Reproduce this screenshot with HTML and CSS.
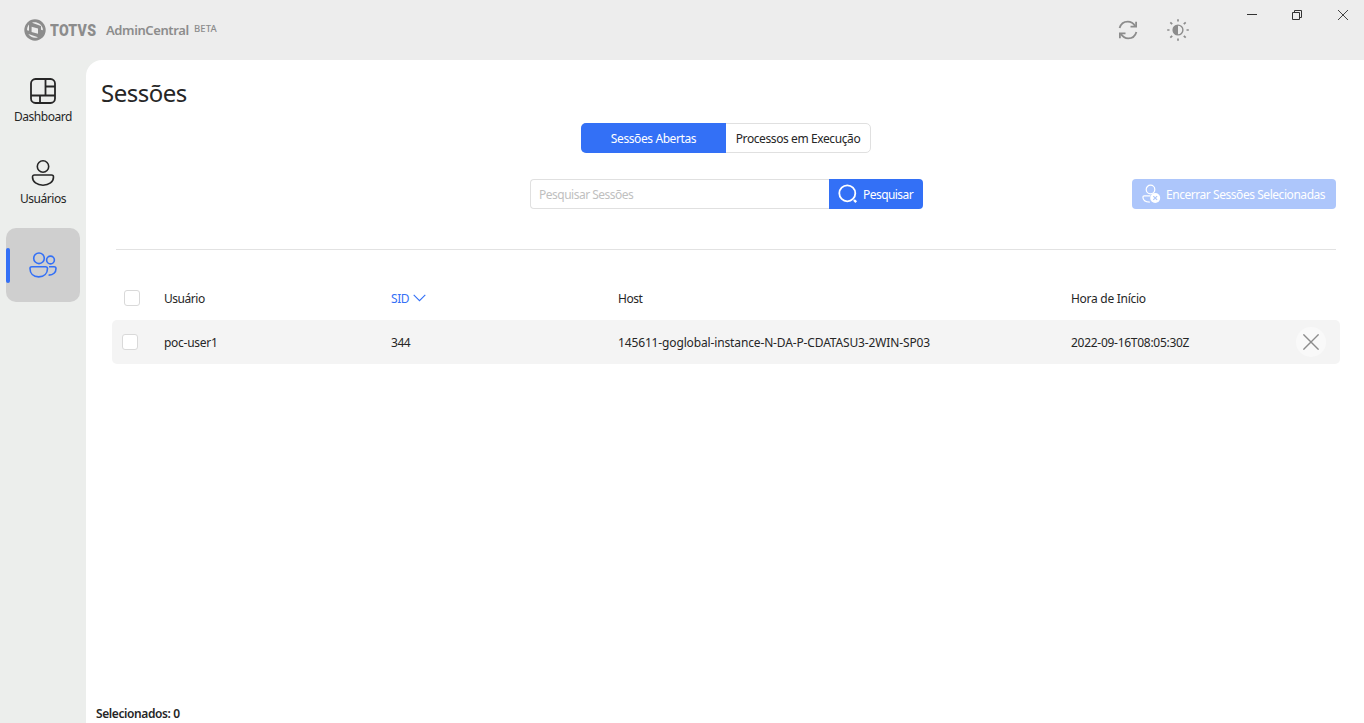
FILE: index.html
```html
<!DOCTYPE html>
<html lang="pt-BR">
  <head>
    <meta charset="UTF-8" />
    <meta name="viewport" content="width=device-width, initial-scale=1.0" />
    <title>TOTVS AdminCentral</title>
    <link rel="stylesheet" href="styles.css" />
  </head>
  <body>
    <header class="topbar">
      <div class="brand">
        <svg class="brand-logo" width="22" height="22" viewBox="0 0 22 22">
          <circle cx="11" cy="11" r="10.7" fill="#8c8c8c" />
          <path d="M7.600 7.800l6.400 1.700v5.200l-6.400-1.700z" fill="#ededed" />
          <path d="M5 5.600v6.200l-1.900-.5C2.900 9.200 3.600 7.200 5 5.600z" fill="#ededed" />
          <path d="M8 3.700c4.300-1.500 9 .8 10.600 5.300.2.700.3 1.500.3 2.300l-1.900-.5V6.900z" fill="#ededed" />
          <path d="M14 18.300c-3.700 1.400-7.600 0-9.700-3.200l2.300.6z" fill="#ededed" />
        </svg>
        <span class="brand-name">TOTVS</span>
        <span class="brand-product">AdminCentral</span>
        <span class="brand-beta">BETA</span>
      </div>
      <div class="tools">
        <svg width="20" height="20" viewBox="0 0 20 20" fill="none" stroke="#8c8c8c" stroke-width="1.800">
          <path d="M1.600 8C2.700 4.200 5.800 1.600 9.700 1.600c3.300 0 5.800 1.700 7.500 4.600" />
          <path d="M18.400 12c-1.100 3.800-4.200 6.400-8.100 6.400-3.300 0-5.800-1.700-7.500-4.600" />
          <path d="M18.100 1.800v4.900h-5.600M1.900 18.200v-4.900h5.600" />
        </svg>
        <svg width="22" height="22" viewBox="0 0 22 22">
          <circle cx="11" cy="11" r="4.900" fill="none" stroke="#8c8c8c" stroke-width="1.400" />
          <path d="M11 6a5 5 0 0 0 0 10z" fill="#8c8c8c" />
          <path d="M11 .2v2.300M11 19.500v2.300M.2 11h2.300M19.500 11h2.300M3.300 3.300l1.900 1.900M16.800 16.800l1.900 1.900M3.300 18.700l1.900-1.900M16.800 5.200l1.900-1.900" stroke="#8c8c8c" stroke-width="1.700" />
        </svg>
      </div>
      <div class="window-buttons">
        <svg width="12" height="12" viewBox="0 0 12 12"><path d="M1 5.500h10" stroke="#333" /></svg>
        <svg width="12" height="12" viewBox="0 0 12 12" fill="none" stroke="#333">
          <path d="M1.500 3.500h7v7h-7zM3.500 3.500v-2h7v7h-2" />
        </svg>
        <svg class="win-close" width="12" height="12" viewBox="0 0 12 12"><path d="M1 1l10 10M11 1L1 11" stroke="#444" /></svg>
      </div>
    </header>

    <div class="layout">
      <nav class="sidebar">
        <a class="nav-item">
          <svg width="26" height="26" viewBox="0 0 26 26" fill="none" stroke="#262626" stroke-width="1.800">
            <rect x="1" y="1" width="24" height="24" rx="4.500" />
            <path d="M15.500 1v16.500M1 17.500h24M15.500 8.500H25M10 17.500V25" />
          </svg>
          <span>Dashboard</span>
        </a>
        <a class="nav-item">
          <svg width="26" height="26" viewBox="0 0 26 26" fill="none" stroke="#262626" stroke-width="1.600">
            <circle cx="13" cy="6.500" r="5.700" />
            <path d="M4.500 15h17c1.300 0 2 .8 2 2 0 5-4.500 8.200-10.500 8.200S2.500 22 2.500 17c0-1.200.7-2 2-2z" />
          </svg>
          <span>Usuários</span>
        </a>
        <a class="nav-item active">
          <svg width="28" height="26" viewBox="0 0 28 26" fill="none" stroke="#3370f6" stroke-width="1.600">
            <circle cx="10" cy="6.300" r="5.300" />
            <circle cx="21.500" cy="8" r="3.900" />
            <path d="M3 14.700h13.500c1.300 0 2 .7 2 1.800 0 4.900-3.300 8.400-8.800 8.400S1 21.400 1 16.500c0-1.100.7-1.800 2-1.800z" />
            <path d="M20 14.700h5.200c1.200 0 1.800.6 1.800 1.700 0 4-2.700 6.800-7.400 6.700" />
          </svg>
        </a>
      </nav>

      <main class="content">
        <h1>Sessões</h1>

        <div class="tabs">
          <button class="tab selected">Sessões Abertas</button>
          <button class="tab">Processos em Execução</button>
        </div>

        <div class="toolbar">
          <div class="search">
            <input type="text" placeholder="Pesquisar Sessões" />
            <button class="search-btn">
              <svg width="20" height="20" viewBox="0 0 20 20" fill="none" stroke="#fff" stroke-width="1.800">
                <circle cx="9.300" cy="9.300" r="8" />
                <path d="M16 16l2.200 2.200" stroke-width="2.400" />
              </svg>
              <span>Pesquisar</span>
            </button>
          </div>
          <button class="end-btn">
            <svg width="20" height="20" viewBox="0 0 20 20" fill="none" stroke="#fff" stroke-width="1.200">
              <circle cx="8.500" cy="5.500" r="4.300" />
              <path d="M8.500 11.800H2.300c-.9 0-1.400.5-1.400 1.300 0 3 2.700 5 6.900 5.100" />
              <circle cx="13.200" cy="14" r="5" fill="#fff" stroke="none" />
              <path d="M11.300 12.100l3.800 3.800M15.100 12.100l-3.800 3.800" stroke="#adc6fb" />
            </svg>
            <span>Encerrar Sessões Selecionadas</span>
          </button>
        </div>

        <div class="table">
          <div class="row head">
            <span class="check"></span>
            <span>Usuário</span>
            <span class="sorted">SID
              <svg width="13" height="8" viewBox="0 0 13 8"><path d="M.7.900l5.800 5.800L12.300.9" fill="none" stroke="#3370f6" stroke-width="1.100" /></svg>
            </span>
            <span>Host</span>
            <span class="date">Hora de Início</span>
          </div>
          <div class="row item">
            <span class="check"></span>
            <span class="user">poc-user1</span>
            <span>344</span>
            <span class="host">145611-goglobal-instance-N-DA-P-CDATASU3-2WIN-SP03</span>
            <span class="date">2022-09-16T08:05:30Z</span>
            <button class="close-btn">
              <svg width="16" height="16" viewBox="0 0 16 16"><path d="M.4.400l15.200 15.200M15.600.4L.4 15.600" stroke="#8c8c8c" stroke-width="1.400" /></svg>
            </button>
          </div>
        </div>

        <footer>Selecionados: 0</footer>
      </main>
    </div>
  </body>
</html>
```
FILE: styles.css
```css
* {
  margin: 0;
  padding: 0;
  box-sizing: border-box;
}
body {
  display: flex;
  flex-direction: column;
  height: 100vh;
  overflow: hidden;
  background: #eceeec;
  font-family: "Noto Sans", "Open Sans", sans-serif;
  font-size: 12px;
  line-height: 16px;
  letter-spacing: -0.45px;
  color: #262626;
}
svg {
  display: block;
  flex: none;
}
button,
input {
  font: inherit;
  letter-spacing: inherit;
  color: inherit;
  border: none;
}
.topbar {
  display: flex;
  height: 60px;
  padding-left: 24px;
  background: #ededed;
  color: #8c8c8c;
}
.brand {
  display: flex;
  align-items: center;
  width: 1094px;
}
.brand-name {
  width: 56px;
  margin-left: 4px;
  font-family: Roboto, sans-serif;
  font-size: 17px;
  font-weight: 900;
  letter-spacing: 0.3px;
  transform: scaleX(0.83);
  transform-origin: left;
}
.brand-product {
  width: 88px;
  font-size: 13px;
  font-weight: 600;
  letter-spacing: -0.4px;
}
.brand-beta {
  padding-bottom: 3px;
  font-size: 9.5px;
  font-weight: 500;
  letter-spacing: 0.1px;
}
.tools {
  display: flex;
  align-items: center;
  gap: 29px;
}
.window-buttons {
  display: flex;
  gap: 33px;
  margin-left: 57px;
  padding-top: 9px;
}
.win-close {
  margin-left: 1px;
}
.layout {
  display: flex;
  flex: 1;
  min-height: 0;
}
.sidebar {
  display: flex;
  flex-direction: column;
  align-items: center;
  gap: 8px;
  width: 86px;
  padding-top: 4px;
}
.nav-item {
  display: flex;
  flex-direction: column;
  align-items: center;
  justify-content: center;
  gap: 5px;
  width: 74px;
  height: 74px;
  border-radius: 10px;
}
.nav-item.active {
  position: relative;
  background: #cfcfcf;
}
.nav-item.active::before {
  content: "";
  position: absolute;
  left: 0;
  top: 20px;
  width: 4px;
  height: 35px;
  border-radius: 2px;
  background: #3370f6;
}
.content {
  display: flex;
  flex-direction: column;
  flex: 1;
  border-top-left-radius: 16px;
  background: #fff;
}
h1 {
  margin: 17px 0 14px 15px;
  font-size: 24px;
  line-height: 32px;
  font-weight: 400;
  letter-spacing: -0.5px;
}
.tabs {
  display: flex;
  width: 290px;
  height: 30px;
  margin-left: 495px;
  border: 1px solid #e0e0e0;
  border-radius: 5px;
}
.tab {
  width: 144px;
  padding-top: 2px;
  background: none;
  letter-spacing: -0.4px;
}
.tab.selected {
  width: 145px;
  margin: -1px 0 -1px -1px;
  border-radius: 5px 0 0 5px;
  background: #3370f6;
  color: #fff;
}
.toolbar {
  display: flex;
  justify-content: space-between;
  height: 71px;
  margin: 26px 28px 0 30px;
  padding-left: 414px;
  border-bottom: 1px solid #e2e2e2;
}
.search {
  display: flex;
  height: 30px;
}
.search input {
  width: 299px;
  padding: 2px 0 0 8px;
  border: 1px solid #e0e0e0;
  border-right: none;
  border-radius: 4px 0 0 4px;
  letter-spacing: -0.5px;
}
.search input::placeholder {
  color: #bfbfbf;
}
.search-btn,
.end-btn {
  display: flex;
  align-items: center;
  height: 30px;
  color: #fff;
}
.search-btn span,
.end-btn span {
  padding-top: 2px;
}
.search-btn {
  gap: 5px;
  width: 94px;
  padding-left: 9px;
  border-radius: 0 4px 4px 0;
  background: #3370f6;
  letter-spacing: -0.55px;
}
.end-btn {
  gap: 4px;
  width: 204px;
  padding-left: 10px;
  border-radius: 4px;
  background: #adc6fb;
}
.table {
  margin: 26px 24px 0 26px;
}
.row {
  display: grid;
  grid-template-columns: 52px 227px 227px 453px 226px 28px;
  align-items: center;
  height: 44px;
}
.row span:not(.check) {
  padding-top: 2px;
}
.row.item {
  border-radius: 5px;
  background: #f4f4f4;
}
.check {
  width: 16px;
  height: 16px;
  margin-left: 10px;
  border: 1px solid #d9d9d9;
  border-radius: 3px;
  background: #fff;
}
.head .check {
  margin-left: 12px;
}
.sorted {
  display: flex;
  align-items: center;
  gap: 4px;
  color: #3370f6;
}
.sorted svg {
  margin-top: -3px;
}
.user,
.date {
  letter-spacing: -0.28px;
}
.host {
  letter-spacing: -0.14px;
}
.close-btn {
  display: flex;
  align-items: center;
  justify-content: center;
  width: 30px;
  height: 30px;
  margin-left: -1px;
  border-radius: 50%;
  background: #f9f9f9;
}
footer {
  margin: auto 0 1px 10px;
  font-weight: 600;
  letter-spacing: -0.4px;
}
```
